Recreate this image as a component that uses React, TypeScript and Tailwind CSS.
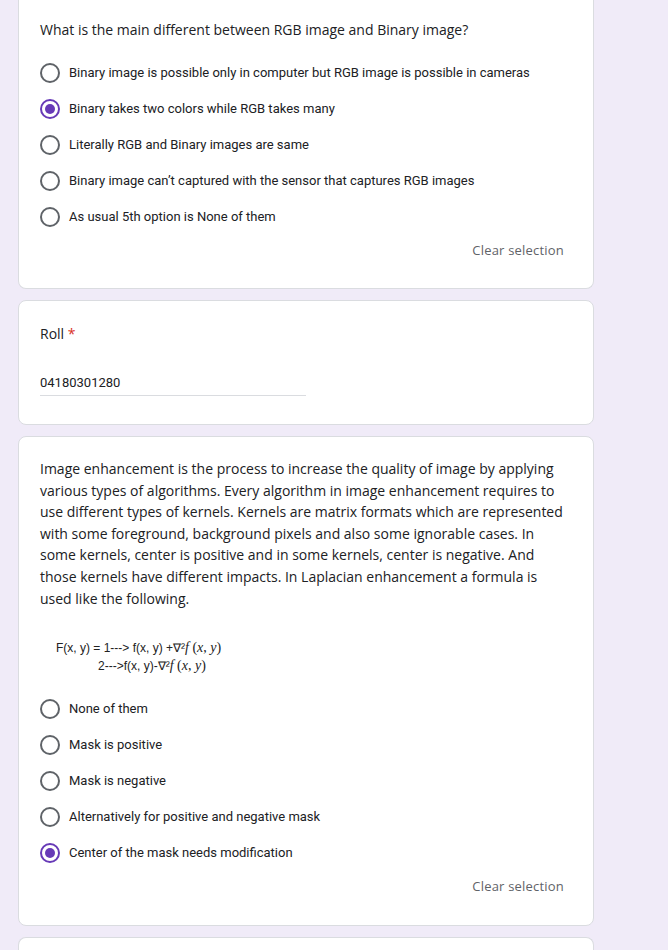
import React from 'react';

const Radio = ({ checked }: { checked?: boolean }) => (
  <span
    className={
      'flex h-[20px] w-[20px] shrink-0 items-center justify-center rounded-full border-2 ' +
      (checked ? 'border-[#673ab7]' : 'border-[#5f6368]')
    }
  >
    {checked && <span className="h-[10px] w-[10px] rounded-full bg-[#673ab7]"></span>}
  </span>
);

const Option = ({ label, checked }: { label: string; checked?: boolean }) => (
  <div className="flex h-[36px] items-center">
    <Radio checked={checked} />
    <span className="ml-[9px] text-[13px] text-[#202124]" style={{ fontFamily: 'Roboto, sans-serif' }}>
      {label}
    </span>
  </div>
);

const ClearSelection = () => (
  <div className="mt-[6px] flex h-[20px] items-center justify-end pr-[5px]">
    <span className="text-[13px] font-medium tracking-[0.2px] text-[#5f6368]">Clear selection</span>
  </div>
);

const MathF = () => (
  <span className="text-[14px]" style={{ fontFamily: '"Liberation Serif", serif' }}>
    <i>f</i>
    {' '}(<i>x</i>, <i>y</i>)
  </span>
);

const App = () => {
  const first = [
    'Binary image is possible only in computer but RGB image is possible in cameras',
    'Binary takes two colors while RGB takes many',
    'Literally RGB and Binary images are same',
    'Binary image can’t captured with the sensor that captures RGB images',
    'As usual 5th option is None of them',
  ];
  const second = [
    'None of them',
    'Mask is positive',
    'Mask is negative',
    'Alternatively for positive and negative mask',
    'Center of the mask needs modification',
  ];

  return (
    <div className="min-h-[950px] bg-[#f0ebf8] pl-[18px]" style={{ fontFamily: '"Open Sans", sans-serif' }}>
      <div className="flex w-[576px] flex-col gap-[11px]">
        {/* question 1 */}
        <div className="rounded-b-lg border border-t-0 border-[#dadce0] bg-white pb-[27px] pl-[21px] pr-[24px] pt-[20px]">
          <div className="h-[20px] text-[14px] leading-[20px] text-[#202124]">
            What is the main different between RGB image and Binary image?
          </div>
          <div className="mt-[15px]">
            {first.map((o, i) => (
              <Option key={i} label={o} checked={i === 1} />
            ))}
          </div>
          <ClearSelection />
        </div>

        {/* roll */}
        <div className="rounded-lg border border-[#dadce0] bg-white pb-[28px] pl-[21px] pr-[24px] pt-[23px]">
          <div className="h-[20px] text-[14px] leading-[20px] text-[#202124]">
            Roll <span className="text-[#d93025]">*</span>
          </div>
          <div className="mt-[29px] w-[266px] border-b border-[#dadce0] pb-[2px]">
            <div className="h-[20px] text-[13px] leading-[20px] text-[#202124]" style={{ fontFamily: 'Roboto, sans-serif' }}>
              04180301280
            </div>
          </div>
        </div>

        {/* question 3 */}
        <div className="rounded-lg border border-[#dadce0] bg-white pb-[28px] pl-[21px] pr-[24px] pt-[21px]">
          <div className="text-[14px] leading-[21.6px] text-[#202124]">
            Image enhancement is the process to increase the quality of image by applying various types of algorithms.
            Every algorithm in image enhancement requires to use different types of kernels. Kernels are matrix formats
            which are represented with some foreground, background pixels and also some ignorable cases. In some kernels,
            center is positive and in some kernels, center is negative. And those kernels have different impacts. In
            Laplacian enhancement a formula is used like the following.
          </div>
          <div className="mt-[30px] pl-[16px] text-[12px] leading-[18px] text-[#222]" style={{ fontFamily: '"Liberation Sans", sans-serif' }}>
            <div>
              F(x, y) = 1---&gt; f(x, y) +∇²<MathF />
            </div>
            <div className="pl-[42px]">
              2---&gt;f(x, y)-∇²<MathF />
            </div>
          </div>
          <div className="mt-[16px]">
            {second.map((o, i) => (
              <Option key={i} label={o} checked={i === 4} />
            ))}
          </div>
          <ClearSelection />
        </div>

        <div className="h-[40px] rounded-t-lg border border-b-0 border-[#dadce0] bg-white"></div>
      </div>
    </div>
  );
};

export default App;
